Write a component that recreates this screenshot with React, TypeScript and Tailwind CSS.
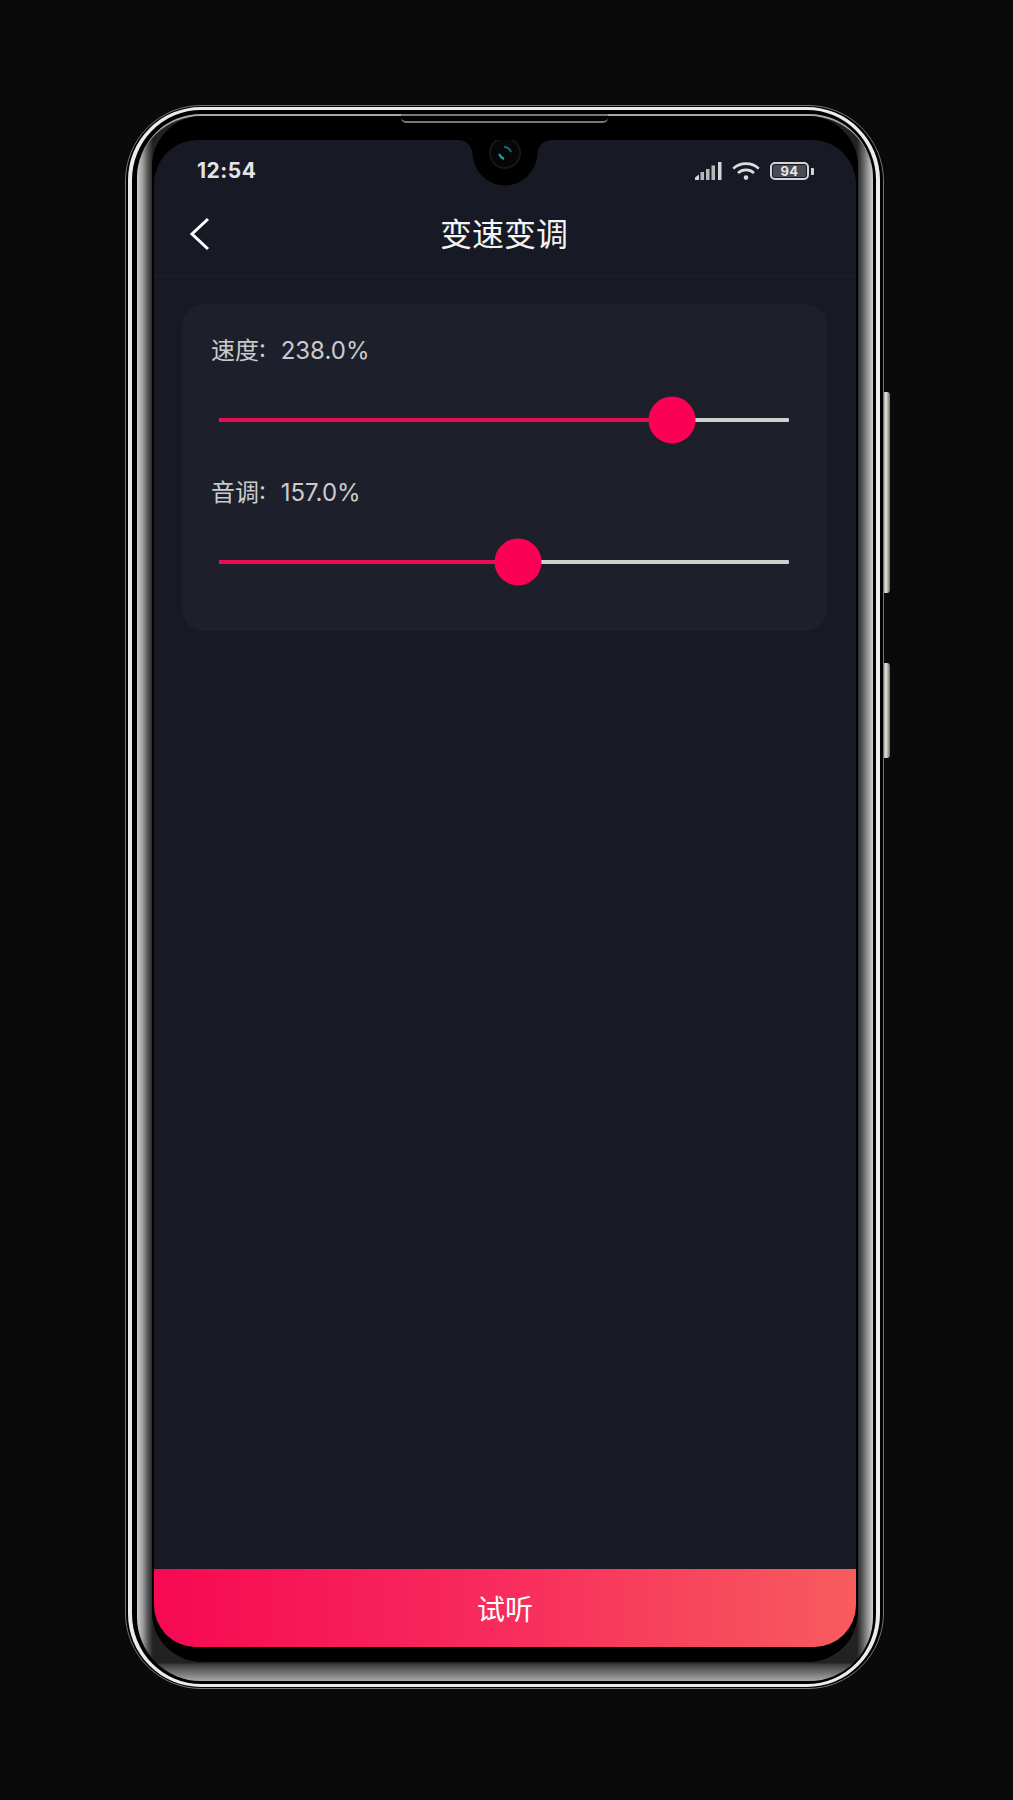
function SignalIcon() {
  return (
    <svg width="27" height="18" viewBox="0 0 27 18" fill="#d4d4d6">
      <path d="M0 18v-2.5L4 12.5V18z" />
      <rect x="5.5" y="10" width="3.5" height="8" fillOpacity="0.85" />
      <rect x="11" y="7" width="3.5" height="11" fillOpacity="0.85" />
      <rect x="16.5" y="3.5" width="3.5" height="14.5" fillOpacity="0.85" />
      <rect x="23" y="0" width="3.5" height="18" />
    </svg>
  );
}

function WifiIcon() {
  return (
    <svg width="28" height="18" viewBox="0 0 28 18" fill="none" stroke="#dcdcde" strokeWidth="2.6">
      <path d="M1.2 6.6C8.3 0 19.7 0 26.8 6.6" />
      <path d="M6 11C10.6 6.8 17.4 6.8 22 11" />
      <circle cx="14" cy="15.6" r="2.3" fill="#dcdcde" stroke="none" />
    </svg>
  );
}

function BatteryIcon() {
  return (
    <div className="flex items-center">
      <div className="h-[18px] w-[39px] rounded-[5px] border-2 border-[#d4d4d6] p-[1px]">
        <div className="flex h-full w-full items-center justify-center rounded-[2px] bg-[#4a4c54] text-[13px] font-bold leading-none tracking-[0.5px] text-[#e6e6e8]">
          94
        </div>
      </div>
      <div className="ml-[2px] h-[7px] w-[3px] rounded-r-[1px] bg-[#d4d4d6]" />
    </div>
  );
}

function SliderRow({ label, percent }: { label: string; percent: number }) {
  return (
    <div className="h-[142px]">
      <p className="pt-[33px] text-[24px] leading-[28px] text-[#cbcbcd] [word-spacing:8px]">{label}</p>
      <div className="relative ml-[8px] mr-[9px] mt-[53px] h-[4px] rounded-[1px] bg-[#cfcfcf]">
        <div className="h-full rounded-l-[1px] bg-[#e80b55]" style={{ width: `${percent}%` }} />
        <div
          className="absolute top-1/2 h-[47px] w-[47px] -translate-x-1/2 -translate-y-1/2 rounded-full bg-[#fb0055]"
          style={{ left: `${percent}%` }}
        />
      </div>
    </div>
  );
}

const SLIDERS = [
  { label: '速度: 238.0%', percent: 79.4 },
  { label: '音调: 157.0%', percent: 52.5 },
];

export default function App() {
  return (
    <div className="relative h-[1800px] w-[1013px] overflow-hidden bg-[#0a0a0a] [font-family:Inter,'Noto_Sans_CJK_SC',sans-serif]">
      {/* 측면 버튼 */}
      <div className="absolute left-[882px] top-[392px] h-[201px] w-[8px] rounded-r-[3px] bg-gradient-to-r from-[#6f6b66] via-[#e8e6e0] to-[#6f6b66]" />
      <div className="absolute left-[882px] top-[663px] h-[95px] w-[8px] rounded-r-[3px] bg-gradient-to-r from-[#6f6b66] via-[#e8e6e0] to-[#6f6b66]" />

      {/* phone body */}
      <div className="absolute left-[125px] top-[105px] h-[1584px] w-[759px] rounded-[76px] border border-[#77777a] bg-black pb-[1px] pl-[2px] pr-[3px] pt-[1px]">
        <div className="h-full w-full rounded-[73px] border-x-4 border-y-[3px] border-[#ecebe8] bg-black pb-[3px] pl-[5px] pr-[3px] pt-[4px]">
          <div className="h-full w-full rounded-[64px] border-t-2 border-[#a8a8a6] bg-[linear-gradient(0deg,#a8a8a8_0px,#3a3a3a_17px,transparent_18px),linear-gradient(90deg,#cfcfcf_0px,#9a9a9a_6px,#555555_11px,#222222_16px,#222222_720px,#555555_725px,#999999_731px,#d0d0d0_736px)] px-[15px] pb-[19px]">
            <div className="h-full w-full rounded-[50px] bg-black" />
          </div>
        </div>
      </div>

      {/* top speaker cut */}
      <div className="absolute left-[401px] top-[114px] h-[9px] w-[207px] rounded-b-[5px] border-b-2 border-t-2 border-[#77777a] bg-black" />

      {/* screen */}
      <div className="absolute left-[154px] top-[140px] flex h-[1507px] w-[702px] flex-col overflow-hidden rounded-b-[42px] rounded-t-[44px] bg-[#171a25]">
        {/* status bar */}
        <div className="flex h-[62px] shrink-0 items-center justify-between pl-[43px] pr-[42px]">
          <span className="text-[21px] font-bold tracking-[0.5px] text-[#e4e4e6]">12:54</span>
          <div className="flex items-center gap-[10px]">
            <SignalIcon />
            <WifiIcon />
            <BatteryIcon />
          </div>
        </div>

        {/* header */}
        <header className="relative flex h-[74px] shrink-0 items-center justify-center border-b border-[#1d212c] pb-[7px] pr-[2px]">
          <svg className="absolute left-[35px] top-[15px]" width="21" height="34" viewBox="0 0 21 34" fill="none" stroke="#ffffff" strokeWidth="3">
            <path d="M19 2L3 17L19 32" />
          </svg>
          <h1 className="text-[32px] font-normal text-[#f4f4f5]">变速变调</h1>
        </header>

        {/* panel */}
        <main className="flex-1 pl-[28px] pr-[29px] pt-[28px]">
          <div className="h-[327px] rounded-[22px] bg-[#1d202b] px-[29px]">
            {SLIDERS.map((s) => (
              <SliderRow key={s.label} label={s.label} percent={s.percent} />
            ))}
          </div>
        </main>

        {/* button */}
        <button className="h-[78px] shrink-0 bg-[linear-gradient(90deg,#f60953,#f82c5c_50%,#f75c5e)] pt-[3px] text-[28px] text-white">
          试听
        </button>
      </div>

      {/* 노치 */}
      <svg className="absolute left-[457px] top-[140px]" width="96" height="46" viewBox="0 0 96 46">
        <path d="M0 0C10 0 15 6 15.5 14C17 33 32 45.5 48 45.5C64 45.5 79 33 80.5 14C81 6 86 0 96 0Z" fill="#000000" />
        <circle cx="48" cy="13" r="15" fill="#050708" stroke="#15181a" strokeWidth="2" />
        <path d="M47 7C50 7 53 9 54 12" fill="none" stroke="#1f6a78" strokeWidth="2" />
        <path d="M42 14C43 16 45 18 47 19" fill="none" stroke="#34a0b0" strokeWidth="2" />
      </svg>
    </div>
  );
}
